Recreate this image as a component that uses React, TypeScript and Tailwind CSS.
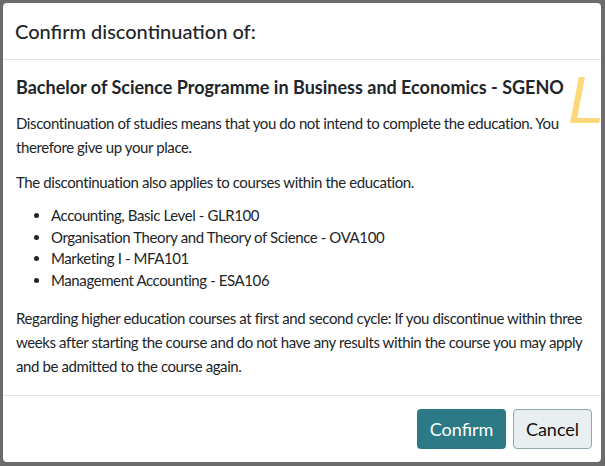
export default function App() {
  const font = { fontFamily: 'Lato, "Noto Sans", sans-serif' };
  return (
    <div className="w-[605px] h-[466px] bg-[#6b6b6b] p-[3px] pr-[4px] pb-[4px] relative overflow-hidden" style={font}>
      <div className="w-full h-full bg-white rounded-[4px] flex flex-col text-[#212529] relative overflow-hidden">
        <div className="h-[57px] flex items-center px-[12px] border-b border-[#e6e6e6] shrink-0">
          <h1 className="text-[20px] leading-none font-medium">Confirm discontinuation of:</h1>
        </div>
        <div className="flex-1 px-[13px] pt-[16px]">
          <h2 className="text-[18px] font-bold leading-[22px]">Bachelor of Science Programme in Business and Economics - SGENO</h2>
          <div className="text-[15px] tracking-[-0.4px]">
            <p className="leading-[24px] mt-[13px]">Discontinuation of studies means that you do not intend to complete the education. You therefore give up your place.</p>
            <p className="leading-[24px] mt-[11px]">The discontinuation also applies to courses within the education.</p>
            <ul className="leading-[21.7px] mt-[11px] list-disc pl-[35px]">
              <li>Accounting, Basic Level - GLR100</li>
              <li>Organisation Theory and Theory of Science - OVA100</li>
              <li>Marketing I - MFA101</li>
              <li>Management Accounting - ESA106</li>
            </ul>
            <p className="leading-[24px] mt-[14px]">Regarding higher education courses at first and second cycle: If you discontinue within three weeks after starting the course and do not have any results within the course you may apply and be admitted to the course again.</p>
          </div>
        </div>
        <div className="h-[67px] border-t border-[#e6e6e6] flex items-center justify-end gap-[7px] pr-[9px] shrink-0">
          <button className="w-[89px] h-[40px] rounded-[4px] bg-[#2c7a86] text-white text-[18px]">Confirm</button>
          <button className="w-[79px] h-[40px] rounded-[4px] bg-[#e9eef0] border border-[#8ea9ad] text-[#111] text-[18px]">Cancel</button>
        </div>
        <div className="absolute left-[565px] top-[64px] text-[#fcd87a] text-[66px] italic leading-none pointer-events-none" style={{ fontFamily: '"Liberation Sans", sans-serif' }}>L.</div>
      </div>
    </div>
  );
}
